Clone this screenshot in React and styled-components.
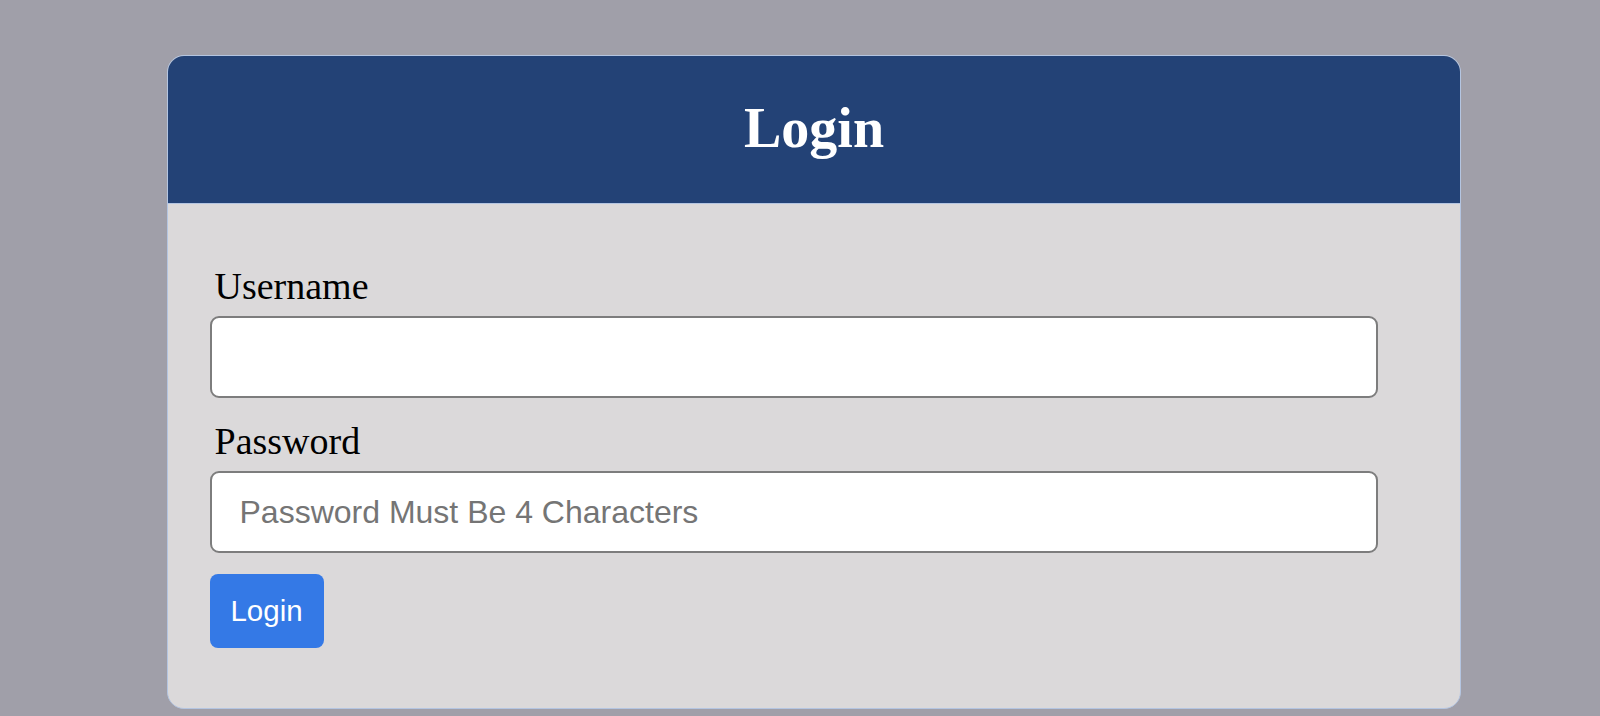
import React from "react";
import styled, { createGlobalStyle } from "styled-components";

const GlobalStyle = createGlobalStyle`
  html, body {
    margin: 0;
    padding: 0;
    background: #a09fa9;
    height: 100%;
  }
  body {
    font-family: "Liberation Serif", "Times New Roman", serif;
  }
`;

const Page = styled.div`
  min-height: 716px;
  box-sizing: border-box;
  padding: 54.5px 0 0 167px;
`;

const Card = styled.div`
  width: 1294px;
  box-sizing: border-box;
  border: 1.5px solid #b4c5e1;
  border-radius: 17px;
  overflow: hidden;
  background: #dbd9da;
`;

const Header = styled.header`
  height: 148px;
  background: #234276;
  border-bottom: 1.5px solid #b4c5e1;
  display: flex;
  align-items: center;
  justify-content: center;
  padding-bottom: 3px;
  box-sizing: border-box;
`;

const Title = styled.h1`
  margin: 0;
  font-family: "Liberation Serif", "Times New Roman", serif;
  font-weight: 700;
  font-size: 56px;
  line-height: 56px;
  color: #ffffff;
`;

const Body = styled.form`
  display: flex;
  flex-direction: column;
  align-items: flex-start;
  padding: 60.5px 43px 60px 41.5px;
`;

const Label = styled.label`
  display: block;
  font-family: "Liberation Serif", "Times New Roman", serif;
  font-size: 38px;
  line-height: 44px;
  color: #000;
  padding-left: 5px;
  margin-top: ${(p) => p.$gap || 0}px;
  margin-bottom: 8px;
`;

const Input = styled.input`
  width: 1168px;
  height: 82px;
  box-sizing: border-box;
  border: 2px solid #7d7d7d;
  border-radius: 9px;
  background: #fff;
  padding: 0 28px;
  font-family: "Liberation Sans", Arial, sans-serif;
  font-size: 32px;
  color: #000;
  outline: none;
  &::placeholder {
    color: #757575;
  }
`;

const Button = styled.button`
  margin-top: 21px;
  width: 114px;
  height: 73.5px;
  border: none;
  border-radius: 8px;
  background: #3479e6;
  color: #fff;
  font-family: "Liberation Sans", Arial, sans-serif;
  font-size: 29.5px;
  padding: 0;
  cursor: pointer;
`;

export default function App() {
  return (
    <>
      <GlobalStyle />
      <Page>
        <Card>
          <Header>
            <Title>Login</Title>
          </Header>
          <Body onSubmit={(e) => e.preventDefault()}>
            <Label htmlFor="username">Username</Label>
            <Input id="username" type="text" />
            <Label htmlFor="password" $gap={21}>
              Password
            </Label>
            <Input
              id="password"
              type="password"
              placeholder="Password Must Be 4 Characters"
            />
            <Button type="submit">Login</Button>
          </Body>
        </Card>
      </Page>
    </>
  );
}
